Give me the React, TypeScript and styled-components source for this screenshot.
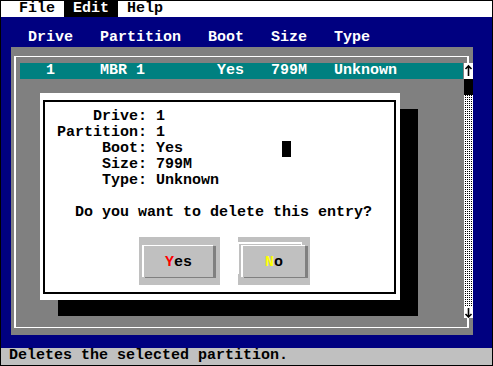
import React from "react";
import styled, { createGlobalStyle } from "styled-components";

const Global = createGlobalStyle`
  html, body { margin: 0; padding: 0; background: #000; }
  body { font-family: "Liberation Mono", "DejaVu Sans Mono", monospace; }
`;

const Screen = styled.div`
  position: relative;
  width: 493px;
  height: 366px;
  box-sizing: border-box;
  border: 1px solid #000;
  display: flex;
  flex-direction: column;
  font-family: "Liberation Mono", "DejaVu Sans Mono", monospace;
  font-size: 15px;
  font-weight: bold;
  line-height: 16px;
  white-space: pre;
`;

const MenuBar = styled.div`
  height: 16px;
  background: #fff;
  display: flex;
  padding-left: 9px;
`;

const MenuItem = styled.div<{ $active?: boolean }>`
  padding: 0 9px;
  height: 16px;
  background: ${(p) => (p.$active ? "#000" : "#fff")};
  color: ${(p) => (p.$active ? "#fff" : "#000")};
`;

const Desktop = styled.div`
  flex: 1;
  background: #000080;
  padding: 13px 19px 13px 10px;
  display: flex;
  flex-direction: column;
`;

const HeaderRow = styled.div`
  height: 16px;
  padding-left: 17px;
  margin-bottom: 1px;
  color: #fff;
`;

const Panel = styled.div`
  position: relative;
  flex: 1;
  background: #808080;
  padding: 9px 4px 7px 3px;
  display: flex;
`;

const Frame = styled.div`
  flex: 1;
  border-style: solid;
  border-color: #fff;
  border-width: 1px 2px;
  padding: 6px 4px;
`;

const SelectedRow = styled.div`
  height: 16px;
  background: #008080;
  color: #fff;
  padding-left: 8px;
`;

const ScrollBar = styled.div`
  position: absolute;
  right: 0;
  top: 16px;
  width: 9px;
  height: 255px;
  display: flex;
  flex-direction: column;
  background: #fff;
`;

const ArrowCell = styled.div<{ $h: number }>`
  height: ${(p) => p.$h}px;
  background: #fff;
  display: flex;
  align-items: flex-start;
  justify-content: center;
`;

const Thumb = styled.div`
  height: 16px;
  background: #000;
`;

const Track = styled.div`
  flex: 1;
  background: repeating-conic-gradient(#000 0 25%, #fff 0 100%) 0 0 / 2px 2px;
`;

const StatusBar = styled.div`
  height: 17px;
  background: #c0c0c0;
  color: #000;
  padding-left: 8px;
`;

const Dialog = styled.div`
  position: absolute;
  left: 39px;
  top: 92px;
  width: 360px;
  height: 207px;
  box-sizing: border-box;
  background: #fff;
  padding: 7px 4px 6px 3px;
  box-shadow: 18px 16px 0 #000;
  display: flex;
`;

const DialogInner = styled.div`
  flex: 1;
  border: 2px solid #000;
  padding: 7px 0 0 12px;
  color: #000;
`;

const Line = styled.div`
  height: 16px;
  display: flex;
`;

const Cursor = styled.span`
  display: inline-block;
  width: 9px;
  height: 16px;
  background: #000;
`;

const ButtonRow = styled.div`
  margin-top: 16px;
  display: flex;
  gap: 18px;
  padding-left: 82px;
`;

const ButtonWell = styled.div<{ $w: number }>`
  width: ${(p) => p.$w}px;
  height: 48px;
  box-sizing: border-box;
  background: #c0c0c0;
  padding: 8px 0 0 3px;
`;

const ButtonFace = styled.div<{ $w: number; $focused?: boolean }>`
  width: ${(p) => p.$w}px;
  height: 32px;
  box-sizing: border-box;
  border-top: 1px solid #fff;
  border-left: 2px solid #fff;
  box-shadow: 3px 1px 0 #808080${(p) =>
      p.$focused ? ", -3px -2px 0 -1px #c0c0c0, -3px -3px 0 0 #fff" : ""};
  background: #c0c0c0;
  display: flex;
  justify-content: center;
  align-items: center;
  padding-top: 2px;
  color: #000;
`;

const Hot = styled.span<{ $c: string }>`
  color: ${(p) => p.$c};
`;

function UpArrow() {
  return (
    <svg width="9" height="16" viewBox="0 0 9 16">
      <path d="M4.5 3 V13 M1.5 6 L4.5 3 L7.5 6" stroke="#000" strokeWidth="1.6" fill="none" />
    </svg>
  );
}

function DownArrow() {
  return (
    <svg width="9" height="11" viewBox="0 0 9 11">
      <path d="M4.5 1 V10 M1.5 7 L4.5 10 L7.5 7" stroke="#000" strokeWidth="1.6" fill="none" />
    </svg>
  );
}

export default function App() {
  return (
    <>
      <Global />
      <Screen>
        <MenuBar>
          <MenuItem>File</MenuItem>
          <MenuItem $active>Edit</MenuItem>
          <MenuItem>Help</MenuItem>
        </MenuBar>
        <Desktop>
          <HeaderRow>{"Drive   Partition   Boot   Size   Type"}</HeaderRow>
          <Panel>
            <Frame>
              <SelectedRow>{"  1     MBR 1        Yes   799M   Unknown"}</SelectedRow>
            </Frame>
            <ScrollBar>
              <ArrowCell $h={16}>
                <UpArrow />
              </ArrowCell>
              <Thumb />
              <Track />
              <ArrowCell $h={11}>
                <DownArrow />
              </ArrowCell>
            </ScrollBar>
          </Panel>
        </Desktop>
        <StatusBar>Deletes the selected partition.</StatusBar>
        <Dialog>
          <DialogInner>
            <Line>{"    Drive: 1"}</Line>
            <Line>{"Partition: 1"}</Line>
            <Line>
              {"     Boot: Yes           "}
              <Cursor />
            </Line>
            <Line>{"     Size: 799M"}</Line>
            <Line>{"     Type: Unknown"}</Line>
            <Line>{" "}</Line>
            <Line>{"  Do you want to delete this entry?"}</Line>
            <ButtonRow>
              <ButtonWell $w={81}>
                <ButtonFace $w={71}>
                  <Hot $c="#ff0000">Y</Hot>es
                </ButtonFace>
              </ButtonWell>
              <ButtonWell $w={72}>
                <ButtonFace $w={64} $focused>
                  <Hot $c="#ffff00">N</Hot>o
                </ButtonFace>
              </ButtonWell>
            </ButtonRow>
          </DialogInner>
        </Dialog>
      </Screen>
    </>
  );
}
